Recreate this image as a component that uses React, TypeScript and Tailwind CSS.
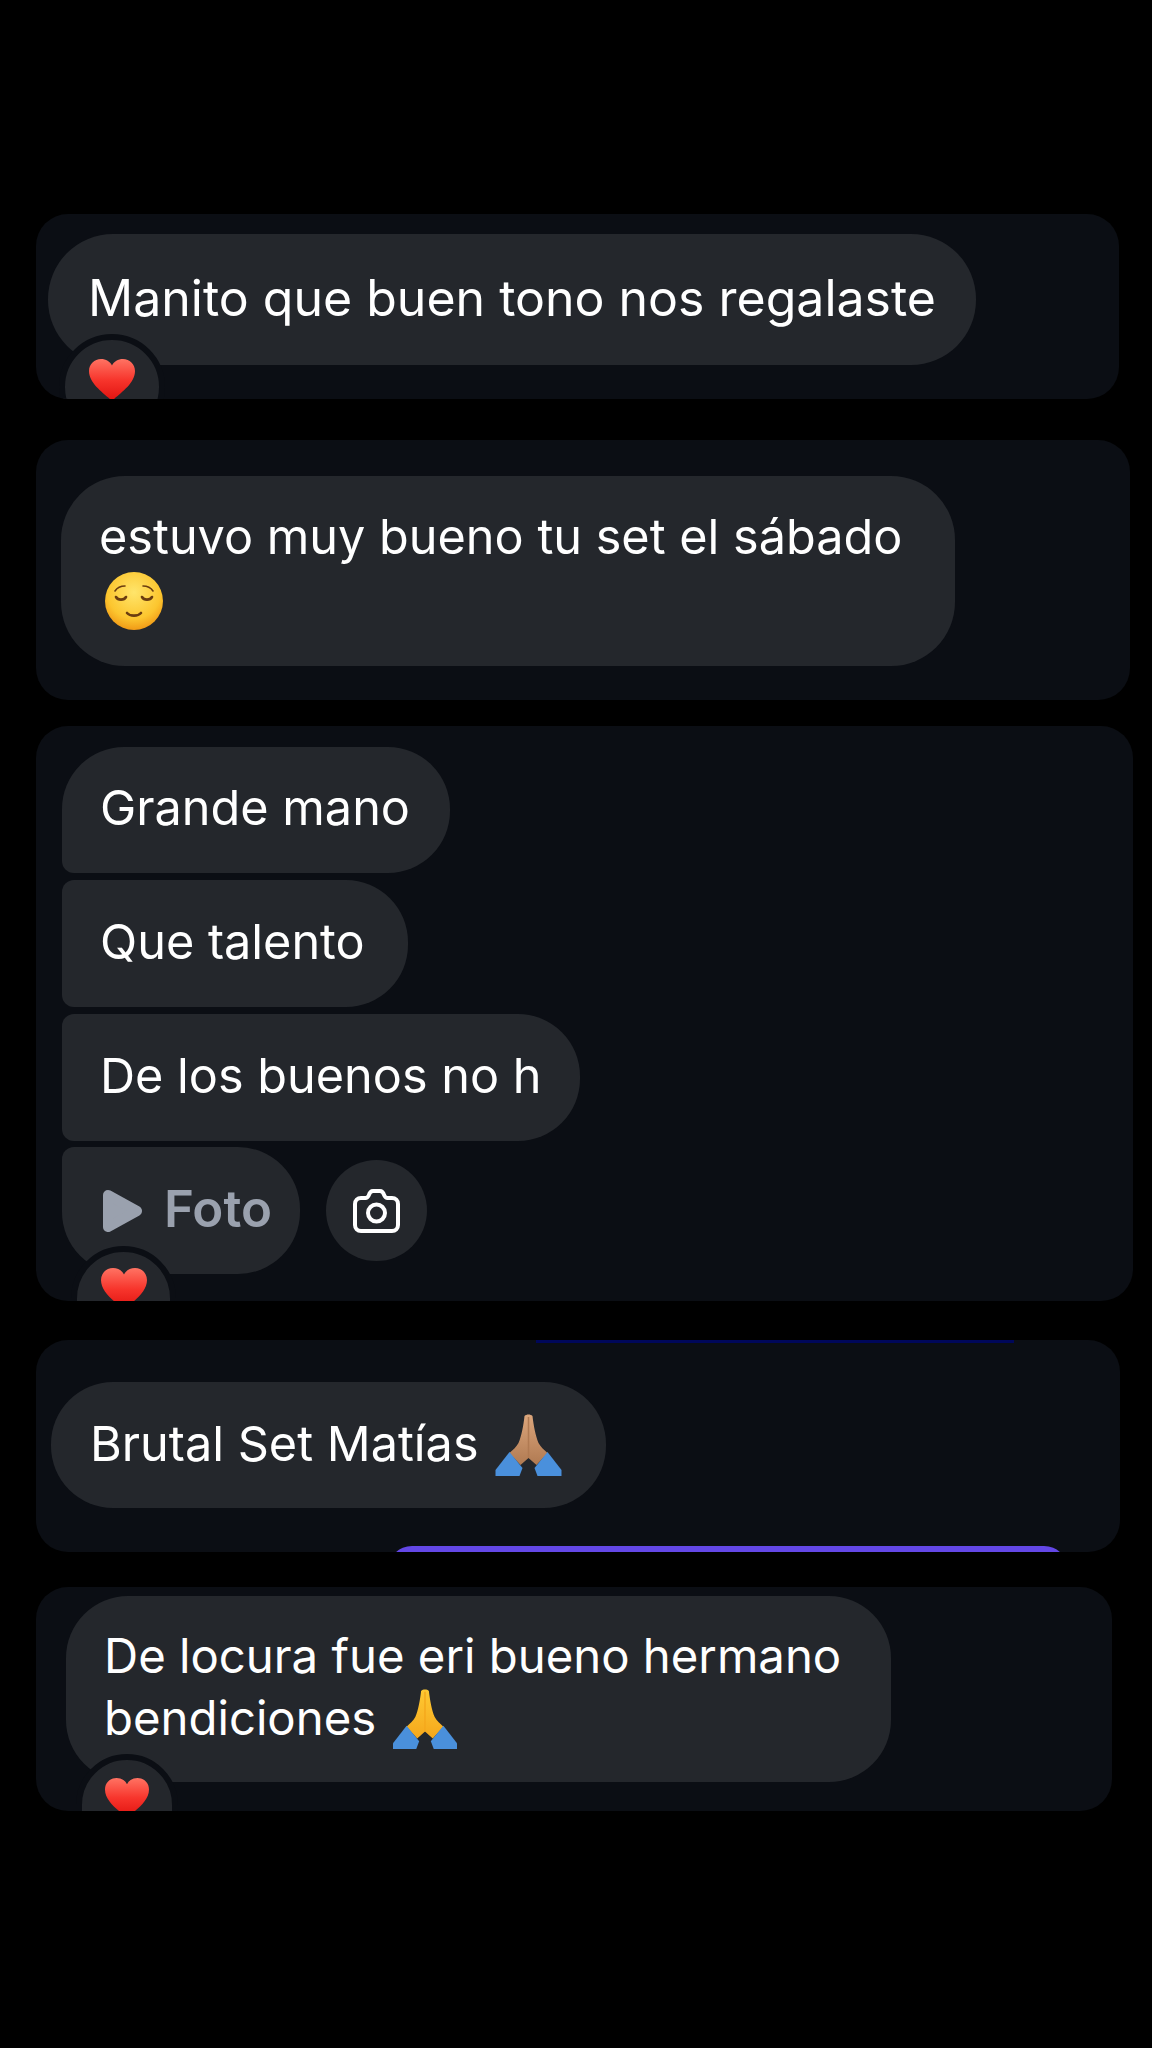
import type { ReactNode } from "react";

const font = "font-['Inter','Noto_Sans',sans-serif]";

function Heart({ className }: { className: string }) {
  return (
    <svg viewBox="0 0 46 42" className={className}>
      <defs>
        <linearGradient id="heartFill" x1="0" y1="0" x2="0" y2="1">
          <stop offset="0" stopColor="#ff7363" />
          <stop offset="0.5" stopColor="#f7352c" />
          <stop offset="1" stopColor="#e0120f" />
        </linearGradient>
      </defs>
      <path
        d="M23 42C15 34 0 25 0 12 0 5 5.500 0 12 0c5 0 9 2.500 11 6.500C25 2.500 29 0 34 0c6.500 0 12 5 12 12 0 13-15 22-23 30Z"
        fill="url(#heartFill)"
      />
    </svg>
  );
}

function RelievedFace({ className }: { className: string }) {
  return (
    <svg viewBox="0 0 58 58" className={className}>
      <defs>
        <radialGradient id="faceFill" cx="0.5" cy="0.35" r="0.7">
          <stop offset="0" stopColor="#ffe56b" />
          <stop offset="0.65" stopColor="#fcc62f" />
          <stop offset="1" stopColor="#ee8f10" />
        </radialGradient>
      </defs>
      <circle cx="29" cy="29" r="29" fill="url(#faceFill)" />
      <g fill="none" stroke="#6b3d10" strokeLinecap="round">
        <path d="M10 19c2-3 6-5 10-5" strokeWidth="1.600" />
        <path d="M48 19c-2-3-6-5-10-5" strokeWidth="1.600" />
        <path d="M11 25c2 3.500 8 3.500 10 0" strokeWidth="2.600" />
        <path d="M37 25c2 3.500 8 3.500 10 0" strokeWidth="2.600" />
        <path d="M22 41c3 3.500 11 3.500 14 0" strokeWidth="2.600" />
      </g>
    </svg>
  );
}

function PrayingHands({ className, skin, shade, id }: { className: string; skin: string; shade: string; id: string }) {
  return (
    <svg viewBox="0 0 66 62" className={className}>
      <defs>
        <linearGradient id={id} x1="0" y1="0" x2="0" y2="1">
          <stop offset="0" stopColor={skin} />
          <stop offset="1" stopColor={shade} />
        </linearGradient>
      </defs>
      <path d="M29 2c2-2 6-2 8 0 1 9 3 20 6 27 2 4 6 7 9 10L41 51l-8-7-8 7L14 39c3-3 7-6 9-10 3-7 5-18 6-27Z" fill={`url(#${id})`} />
      <path d="M33 3v41" stroke={shade} strokeWidth="1.500" />
      <path d="M14 38 0 56v6h24l3-8Z" fill="#4a90dc" />
      <path d="M52 38l14 18v6H42l-3-8Z" fill="#4a90dc" />
    </svg>
  );
}

function CameraIcon() {
  return (
    <svg viewBox="0 0 47 44" className="h-[44px] w-[47px]" fill="none" stroke="#ffffff" strokeWidth="4" strokeLinejoin="round">
      <path d="M8 9h4.500c1.500 0 2.500-1 3.200-2.500C16.500 4 18 2 20 2h7c2 0 3.500 2 4.300 4.500C32 8 33 9 34.500 9H39c3.500 0 6 2.500 6 6v21c0 3.500-2.500 6-6 6H8c-3.500 0-6-2.500-6-6V15c0-3.500 2.500-6 6-6Z" />
      <circle cx="23.500" cy="24" r="8.500" />
    </svg>
  );
}

function PlayIcon() {
  return (
    <svg viewBox="0 0 40 44" className="h-[44px] w-[40px]" fill="#9aa1ae" stroke="#9aa1ae" strokeWidth="10" strokeLinejoin="round">
      <path d="M5 6 34 22 5 38Z" />
    </svg>
  );
}

function Card({ className, children }: { className: string; children: ReactNode }) {
  return <div className={`relative overflow-hidden rounded-[32px] bg-[#0b0e14] ${className}`}>{children}</div>;
}

function Reaction({ className, heartClass }: { className: string; heartClass: string }) {
  return (
    <div className={`absolute box-content flex h-[94px] justify-center rounded-full border-[6px] border-[#0b0e14] bg-[#24272c] ${className}`}>
      <Heart className={heartClass} />
    </div>
  );
}

export default function App() {
  return (
    <div className={`flex min-h-[2048px] w-[1152px] flex-col items-start bg-black pl-[36px] pt-[214px] text-[48.600px] leading-[62px] text-white ${font}`}>
      <Card className="h-[185px] w-[1083px] pl-[12px] pt-[20px]">
        <div className="flex h-[131px] w-[928px] items-center rounded-[65px] bg-[#24272c] pb-[3px] pl-[40px] text-[50px]">
          <span>Manito que buen tono nos regalaste</span>
        </div>
        <Reaction className="left-[23px] top-[120px] w-[94px]" heartClass="mt-[19px] h-[42px] w-[46px] shrink-0" />
      </Card>

      <Card className="mt-[41px] h-[260px] w-[1094px] pl-[25px] pt-[36px]">
        <div className="h-[190px] w-[894px] rounded-[64px] bg-[#24272c] pl-[38px] pt-[30px]">
          <p>estuvo muy bueno tu set el sábado</p>
          <RelievedFace className="ml-[6px] mt-[4px] h-[58px] w-[58px]" />
        </div>
      </Card>

      <Card className="mt-[26px] h-[575px] w-[1097px] pl-[26px] pt-[21px]">
        <div className="flex flex-col items-start gap-[7px]">
          <div className="flex h-[126px] w-[388px] items-center rounded-[62px] rounded-bl-[12px] bg-[#24272c] pb-[4px] pl-[38px]">Grande mano</div>
          <div className="flex h-[127px] w-[346px] items-center rounded-r-[62px] rounded-l-[12px] bg-[#24272c] pb-[4px] pl-[38px]">Que talento</div>
          <div className="flex h-[127px] w-[518px] items-center rounded-r-[62px] rounded-l-[12px] bg-[#24272c] pb-[4px] pl-[38px]">De los buenos no h</div>
          <div className="-mt-[1px] flex items-center gap-[26px]">
            <div className="flex h-[127px] w-[238px] items-center gap-[21px] rounded-[62px] rounded-tl-[12px] bg-[#24272c] pl-[41px] text-[51px] font-semibold text-[#9aa1ae]">
              <PlayIcon />
              <span className="mb-[4px]">Foto</span>
            </div>
            <div className="flex h-[101px] w-[101px] items-center justify-center rounded-full bg-[#24272c]">
              <CameraIcon />
            </div>
          </div>
        </div>
        <Reaction className="left-[35px] top-[520px] w-[93px]" heartClass="mt-[16px] h-[42px] w-[46px] shrink-0" />
      </Card>

      <Card className="mt-[39px] h-[212px] w-[1084px] pl-[15px] pt-[42px]">
        <div className="flex h-[126px] w-[555px] items-center rounded-[62px] bg-[#24272c] pl-[39px]">
          <span className="mb-[2px]">Brutal Set Matías</span>
          <PrayingHands id="prayTone" className="ml-[16px] h-[62px] w-[67px]" skin="#dca67c" shade="#b07a52" />
        </div>
        <div className="absolute left-[500px] top-0 h-[3px] w-[478px] bg-[#00075a]" />
        <div className="absolute left-[352px] top-[206px] h-[30px] w-[680px] rounded-t-[24px] bg-[#6347e6]" />
      </Card>

      <Card className="mt-[35px] h-[224px] w-[1076px] pl-[30px] pt-[9px]">
        <div className="h-[186px] w-[825px] rounded-[62px] bg-[#24272c] pl-[38px] pt-[29px] text-[47.300px]">
          <p>De locura fue eri bueno hermano</p>
          <p className="flex items-start">
            bendiciones
            <PrayingHands id="prayYellow" className="ml-[17px] mt-[1px] h-[62px] w-[64px]" skin="#ffc933" shade="#f5a81c" />
          </p>
        </div>
        <Reaction className="left-[40px] top-[167px] w-[90px]" heartClass="mt-[17px] h-[42px] w-[44px] shrink-0" />
      </Card>
    </div>
  );
}
